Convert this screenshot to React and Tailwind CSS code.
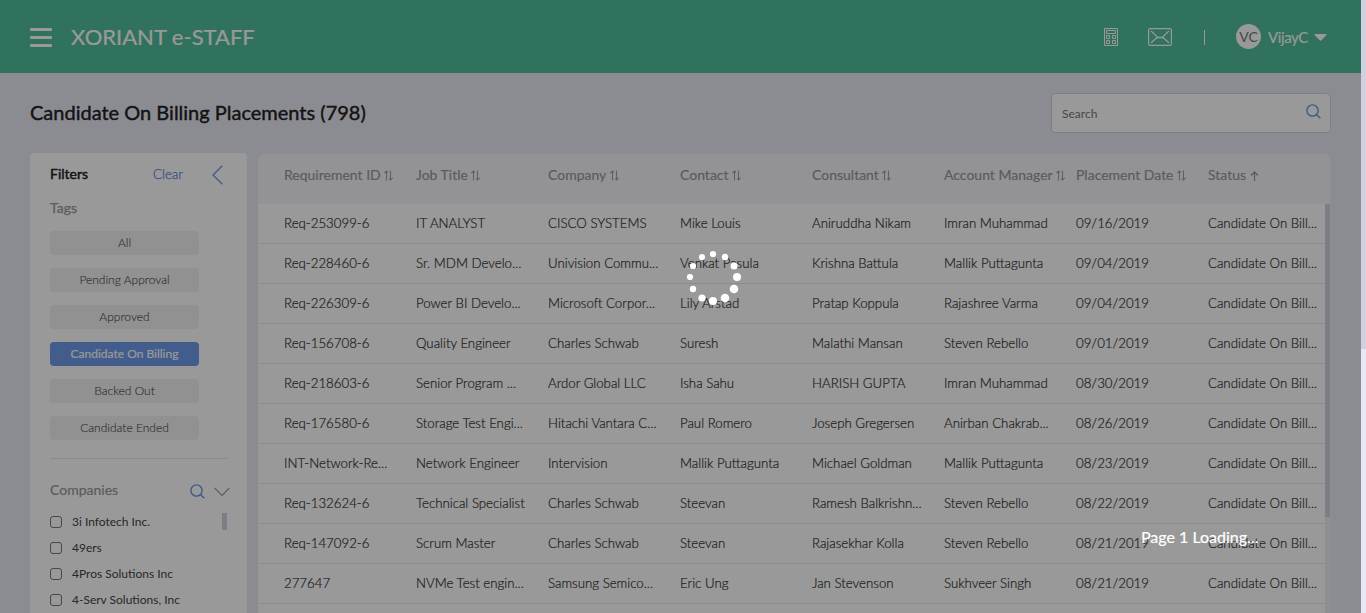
const columns = ["Requirement ID", "Job Title", "Company", "Contact", "Consultant", "Account Manager", "Placement Date", "Status"];

const rows = [
  ["Req-253099-6", "IT ANALYST", "CISCO SYSTEMS", "Mike Louis", "Aniruddha Nikam", "Imran Muhammad", "09/16/2019"],
  ["Req-228460-6", "Sr. MDM Develo...", "Univision Commu...", "Venkat Pasula", "Krishna Battula", "Mallik Puttagunta", "09/04/2019"],
  ["Req-226309-6", "Power BI Develo...", "Microsoft Corpor...", "Lily Arstad", "Pratap Koppula", "Rajashree Varma", "09/04/2019"],
  ["Req-156708-6", "Quality Engineer", "Charles Schwab", "Suresh", "Malathi Mansan", "Steven Rebello", "09/01/2019"],
  ["Req-218603-6", "Senior Program ...", "Ardor Global LLC", "Isha Sahu", "HARISH GUPTA", "Imran Muhammad", "08/30/2019"],
  ["Req-176580-6", "Storage Test Engi...", "Hitachi Vantara C...", "Paul Romero", "Joseph Gregersen", "Anirban Chakrab...", "08/26/2019"],
  ["INT-Network-Re...", "Network Engineer", "Intervision", "Mallik Puttagunta", "Michael Goldman", "Mallik Puttagunta", "08/23/2019"],
  ["Req-132624-6", "Technical Specialist", "Charles Schwab", "Steevan", "Ramesh Balkrishn...", "Steven Rebello", "08/22/2019"],
  ["Req-147092-6", "Scrum Master", "Charles Schwab", "Steevan", "Rajasekhar Kolla", "Steven Rebello", "08/21/2019"],
  ["277647", "NVMe Test engin...", "Samsung Semico...", "Eric Ung", "Jan Stevenson", "Sukhveer Singh", "08/21/2019"],
];

const tags = ["All", "Pending Approval", "Approved", "Candidate On Billing", "Backed Out", "Candidate Ended"];
const companies = ["3i Infotech Inc.", "49ers", "4Pros Solutions Inc", "4-Serv Solutions, Inc"];

const dots = [
  [33, 9, 3.1], [45, 12, 3.2], [54, 21, 3.5], [57, 32, 4], [54, 44, 4.3], [45, 53, 4.3],
  [33, 56, 4], [22, 53, 3.6], [13, 44, 3.2], [10, 32, 3.1], [13, 21, 3.1], [22, 12, 3.1],
];

function SearchIcon() {
  return (
    <svg width="15" height="15" viewBox="0 0 15 15" fill="none" stroke="#6a95e2" strokeWidth="1.4">
      <circle cx="6.5" cy="6.500" r="5.600" />
      <path d="M10.500 10.500l3.800 3.800" />
    </svg>
  );
}

function SortIcon({ single }) {
  return single ? (
    <svg className="ml-[3.5px] mt-0.5" width="9" height="10" viewBox="0 0 9 10" fill="none" stroke="#999" strokeWidth="1.3">
      <path d="M4.5 10V1M1 4.5l3.5-3.5L8 4.5" />
    </svg>
  ) : (
    <svg className="ml-[3.5px] mt-0.5" width="9" height="11" viewBox="0 0 9 11" fill="none" stroke="#a0a0a0" strokeWidth="1.1">
      <path d="M2.500 10.500V1M.3 3.200L2.500 1l1.400 1.400M6.500 .5v9.500M8.700 7.800L6.500 10 5.100 8.600" />
    </svg>
  );
}

function Header() {
  return (
    <header className="flex h-[73px] shrink-0 items-center bg-[#50be9b] pl-[30px] pr-[34px] text-white">
      <div className="mt-0.5 flex w-[22px] flex-col gap-[5px]">
        <span className="h-[3px] rounded-[1px] bg-white" />
        <span className="h-[3px] rounded-[1px] bg-white" />
        <span className="h-[3px] rounded-[1px] bg-white" />
      </div>
      <h1 className="ml-[19px] text-[22px] leading-7 whitespace-nowrap [-webkit-text-stroke:0.2px_white]">XORIANT e-STAFF</h1>
      <div className="ml-auto flex items-center">
        <svg width="14" height="18" viewBox="0 0 14 18" fill="none" stroke="white">
          <path d="M.5.5h13v17H.5zM2.5 2.5h9v3h-9zM2.5 7.5h3v3h-3zM8.5 7.5h3v3h-3zM2.5 12.5h3v3h-3zM8.5 12.5h3v3h-3z" />
        </svg>
        <svg width="24" height="18" viewBox="0 0 24 18" fill="none" stroke="white" strokeWidth="1.2" className="ml-[30px]">
          <rect x=".6" y=".6" width="22.8" height="16.8" rx="1.5" />
          <path d="M3 3l7.500 7q1.500 -1.500 3 0L21 3M3 15l6.500-6M21 15l-6.500-6" />
        </svg>
        <span className="ml-8 mt-0.5 h-[15px] w-px bg-white" />
        <span className="ml-[31px] flex size-[25px] items-center justify-center rounded-full bg-white text-sm text-[#777]">VC</span>
        <span className="ml-[7px] w-[41px] text-[15px] leading-5 tracking-[-0.4px] [-webkit-text-stroke:0.1px_white]">VijayC</span>
        <svg width="13" height="7" viewBox="0 0 13 7" fill="white" className="ml-[5px] mt-0.5">
          <path d="M1 0h11q1 0 .5 1L7.100 6.500q-.6.6-1.200 0L.5 1Q0 0 1 0z" />
        </svg>
      </div>
    </header>
  );
}

function Filters() {
  return (
    <aside className="w-[217px] shrink-0 overflow-hidden rounded-t bg-white px-5">
      <div className="flex h-[42px] items-center text-sm">
        <span className="text-[#222] [-webkit-text-stroke:0.45px_#222]">Filters</span>
        <span className="ml-auto text-[13.3px] font-light text-[#5f85dc] [-webkit-text-stroke:0.25px_#5f85dc]">Clear</span>
        <svg width="11" height="20" viewBox="0 0 11 20" fill="none" stroke="#6a95e2" strokeWidth="1.3" className="ml-[29px] mr-1 mt-0.5">
          <path d="M10.3.8L1 10l9.300 9.200" />
        </svg>
      </div>
      <div className="mt-1 h-[18px] text-sm leading-[18px] text-[#999] [-webkit-text-stroke:0.25px_#999]">Tags</div>
      <div className="mt-[14px] flex w-[149px] flex-col gap-[13px]">
        {tags.map((t) => (
          <div
            key={t}
            className={
              "h-6 rounded text-center text-xs leading-6 " +
              (t === "Candidate On Billing"
                ? "bg-[#6e9be9] text-white [-webkit-text-stroke:0.15px_white]"
                : "bg-[#f2f2f2] text-[#555] font-light [-webkit-text-stroke:0.15px_#555]")
            }
          >
            {t}
          </div>
        ))}
      </div>
      <div className="mt-[18px] h-px bg-[#e6e6e6]" />
      <div className="mt-[21px] -mr-[3px] flex h-5 items-center text-sm text-[#999] [-webkit-text-stroke:0.2px_#999]">
        <span>Companies</span>
        <span className="ml-auto mt-[3px]"><SearchIcon /></span>
        <svg width="16" height="10" viewBox="0 0 16 10" fill="none" stroke="#999" strokeWidth="1.2" className="ml-[9px] mt-1">
          <path d="M.5.8L8 8.500l7.500-7.700" />
        </svg>
      </div>
      <div className="mt-[9px] flex justify-between">
        <ul>
          {companies.map((c) => (
            <li key={c} className="flex h-[26px] items-center text-xs text-[#444]">
              <span className="mr-[10px] size-3 rounded-[3px] border border-[#777]" />
              {c}
            </li>
          ))}
        </ul>
        <span className="mt-1 h-[17px] w-[5px] bg-[#d0d0de]" />
      </div>
    </aside>
  );
}

function Table() {
  return (
    <main className="flex w-[1073px] shrink-0 flex-col overflow-hidden rounded-t-lg border-r border-t border-[#eeeff4] bg-white">
      <div className="flex h-[50px] shrink-0 bg-[#f5f6fa] pl-[26px]">
        {columns.map((c) => (
          <div key={c} className="flex h-[41px] w-[132px] shrink-0 items-center whitespace-nowrap text-sm text-[#999] [-webkit-text-stroke:0.2px_#999]">
            {c}
            <SortIcon single={c === "Status"} />
          </div>
        ))}
      </div>
      <div className="flex">
        <div className="w-[1067px] shrink-0">
          {rows.map((r) => (
            <div key={r[0]} className="flex h-10 border-b border-[#e9e9eb] pl-[26px]">
              {[...r, "Candidate On Bill..."].map((v, i) => (
                <div key={i} className="w-[132px] shrink-0 whitespace-nowrap text-[13.25px] font-light leading-[38px] text-[#333] [-webkit-text-stroke:0.2px_#333]">{v}</div>
              ))}
            </div>
          ))}
        </div>
        <div className="h-[410px] w-[5px] bg-[#eeeef5]">
          <div className="h-[313px] bg-[#d0d0de]" />
        </div>
      </div>
    </main>
  );
}

export default function App() {
  return (
    <div className="relative flex h-[613px] w-[1366px] overflow-hidden font-['Lato',sans-serif]">
      <div className="relative flex w-[1361px] flex-col overflow-hidden bg-[#e8e9f3]">
        <Header />
        <div className="flex h-20 shrink-0 items-center justify-between pl-[30px] pr-[30px]">
          <h2 className="-mt-0.5 text-xl text-[#222] [-webkit-text-stroke:0.4px_#222]">Candidate On Billing Placements (798)</h2>
          <div className="flex h-10 w-[280px] items-center justify-between rounded border border-[#d2d2d6] bg-white pl-[10px] pr-[9px] text-xs text-[#777]">
            <span className="mt-0.5">Search</span>
            <span className="-mt-[3px]"><SearchIcon /></span>
          </div>
        </div>
        <div className="flex h-[460px] gap-[11px] pl-[30px]">
          <Filters />
          <Table />
        </div>
        <div className="absolute inset-0 bg-black/40" />
      </div>
      <div className="w-[5px] bg-[#e8e9f3]">
        <div className="h-[349px] bg-[#d0d0de]" />
      </div>
      <svg className="absolute left-[680px] top-[245px]" width="70" height="65" fill="white">
        {dots.map(([x, y, r]) => <circle key={`${x}-${y}`} cx={x} cy={y} r={r} />)}
      </svg>
      <div className="absolute left-[1141px] top-[527px] text-base leading-5 whitespace-nowrap text-white [-webkit-text-stroke:0.2px_white]">Page 1 Loading...</div>
    </div>
  );
}
